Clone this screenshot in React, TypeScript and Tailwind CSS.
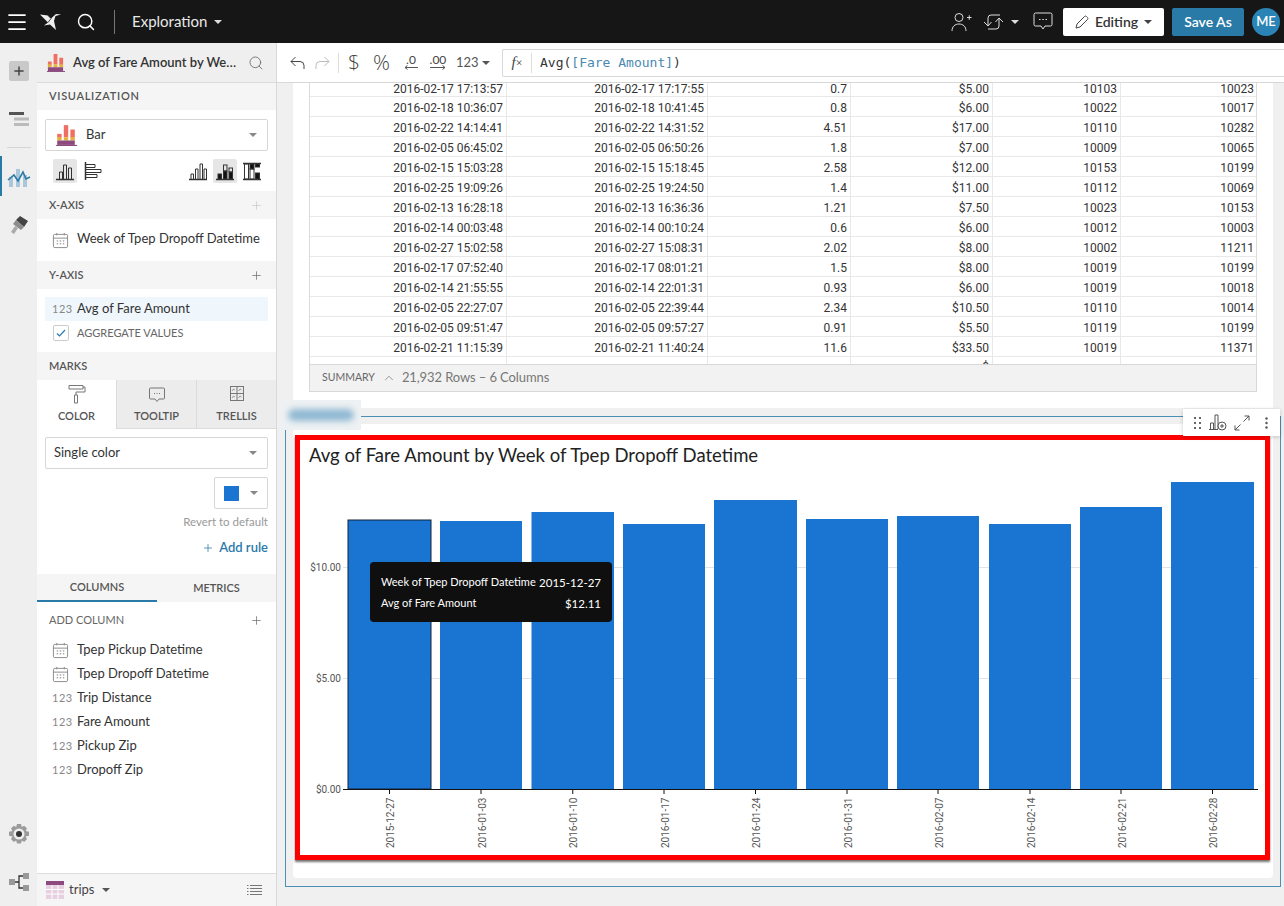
import { ChevronUp, Menu, Plus, Search } from "lucide-react";

const rows = [
  ["2016-02-17 17:13:57", "2016-02-17 17:17:55", "0.7", "$5.00", "10103", "10023"],
  ["2016-02-18 10:36:07", "2016-02-18 10:41:45", "0.8", "$6.00", "10022", "10017"],
  ["2016-02-22 14:14:41", "2016-02-22 14:31:52", "4.51", "$17.00", "10110", "10282"],
  ["2016-02-05 06:45:02", "2016-02-05 06:50:26", "1.8", "$7.00", "10009", "10065"],
  ["2016-02-15 15:03:28", "2016-02-15 15:18:45", "2.58", "$12.00", "10153", "10199"],
  ["2016-02-25 19:09:26", "2016-02-25 19:24:50", "1.4", "$11.00", "10112", "10069"],
  ["2016-02-13 16:28:18", "2016-02-13 16:36:36", "1.21", "$7.50", "10023", "10153"],
  ["2016-02-14 00:03:48", "2016-02-14 00:10:24", "0.6", "$6.00", "10012", "10003"],
  ["2016-02-27 15:02:58", "2016-02-27 15:08:31", "2.02", "$8.00", "10002", "11211"],
  ["2016-02-17 07:52:40", "2016-02-17 08:01:21", "1.5", "$8.00", "10019", "10199"],
  ["2016-02-14 21:55:55", "2016-02-14 22:01:31", "0.93", "$6.00", "10019", "10018"],
  ["2016-02-05 22:27:07", "2016-02-05 22:39:44", "2.34", "$10.50", "10110", "10014"],
  ["2016-02-05 09:51:47", "2016-02-05 09:57:27", "0.91", "$5.50", "10119", "10199"],
  ["2016-02-21 11:15:39", "2016-02-21 11:40:24", "11.6", "$33.50", "10019", "11371"],
  ["", "", "", "$", "", ""],
];

const bars = [
  { x: 348, w: 83, top: 520, label: "2015-12-27" },
  { x: 440, w: 82, top: 521, label: "2016-01-03" },
  { x: 531.5, w: 82.5, top: 512, label: "2016-01-10" },
  { x: 623, w: 82, top: 524, label: "2016-01-17" },
  { x: 714, w: 83, top: 500, label: "2016-01-24" },
  { x: 806, w: 82, top: 519, label: "2016-01-31" },
  { x: 897, w: 82, top: 516, label: "2016-02-07" },
  { x: 989, w: 82, top: 524, label: "2016-02-14" },
  { x: 1080, w: 82, top: 507, label: "2016-02-21" },
  { x: 1171, w: 83, top: 482, label: "2016-02-28" },
];

const columns = [
  { kind: "date", name: "Tpep Pickup Datetime" },
  { kind: "date", name: "Tpep Dropoff Datetime" },
  { kind: "num", name: "Trip Distance" },
  { kind: "num", name: "Fare Amount" },
  { kind: "num", name: "Pickup Zip" },
  { kind: "num", name: "Dropoff Zip" },
];

function Caret({ className = "border-t-[#777]" }: { className?: string }) {
  return <span className={`inline-block w-0 h-0 border-x-[4px] border-x-transparent border-t-[4px] ${className}`} />;
}

function BarColorIcon({ size = 19 }: { size?: number }) {
  return (
    <svg width={size} height={size} viewBox="0 0 20 20" className="shrink-0">
      <rect x="2" y="9" width="4" height="3.5" fill="#ef6f63" />
      <rect x="8" y="1" width="4" height="11" fill="#ef6f63" />
      <rect x="14" y="5" width="4" height="7.5" fill="#ef6f63" />
      <rect x="2" y="12" width="4" height="3" fill="#e3b33d" />
      <rect x="8" y="12" width="4" height="3" fill="#e3b33d" />
      <rect x="14" y="12" width="4" height="3" fill="#e3b33d" />
      <rect x="2" y="15" width="16" height="4" fill="#8c4a7e" />
      <rect x="1" y="19" width="19" height="1" fill="#8c4a7e" />
    </svg>
  );
}

function CalendarIcon() {
  return (
    <svg width="17" height="17" viewBox="0 0 18 18" fill="none" stroke="#888" strokeWidth="1" className="shrink-0">
      <rect x="1.5" y="2.5" width="15" height="14" rx="1.5" />
      <path d="M1.5 6.5h15M5 1v2.5M13 1v2.5" />
      <path d="M5 9.5h1.5M8.2 9.5h1.5M11.5 9.5H13M5 12.5h1.5M8.2 12.5h1.5M11.5 12.5H13" stroke="#777" />
    </svg>
  );
}

function ChartToggle({ kind }: { kind: string }) {
  const shared = { width: 20, height: 20, viewBox: "0 0 20 20", fill: "none", stroke: "#333", strokeWidth: 1 };
  if (kind === "column") {
    return (
      <svg {...shared}>
        <path d="M1 18.5h18" strokeWidth="1.5" />
        <path d="M4.5 18v-7h3v7M8.5 18V4h3v14M13.5 18V7h3v11" />
      </svg>
    );
  }
  if (kind === "row") {
    return (
      <svg {...shared}>
        <path d="M1.5 1v18" strokeWidth="1.5" />
        <path d="M2 3.5h9v3H2M2 8.5h15v3H2M2 13.5h11v3H2" />
      </svg>
    );
  }
  if (kind === "grouped") {
    return (
      <svg {...shared}>
        <path d="M1 18.5h18" strokeWidth="1.5" />
        <path d="M3 18v-5h2.5v5M7.5 18V8H10v10M12 18V3h2.5v15M16 18V8h2.5v10" />
      </svg>
    );
  }
  if (kind === "stacked") {
    return (
      <svg {...shared}>
        <path d="M1 18.5h18" strokeWidth="1.5" />
        <rect x="3" y="13" width="3.5" height="5" fill="#111" />
        <rect x="8.5" y="10" width="3.5" height="8" fill="#111" />
        <rect x="8.5" y="4" width="3.5" height="6" />
        <rect x="14" y="11" width="3.5" height="7" fill="#111" />
        <rect x="14" y="7" width="3.5" height="4" />
      </svg>
    );
  }
  return (
    <svg {...shared}>
      <path d="M1 2.5h18M1 18.5h18" strokeWidth="1.5" />
      <rect x="2.5" y="3" width="4" height="15" />
      <rect x="8" y="3" width="4" height="5" fill="#111" />
      <rect x="8" y="8" width="4" height="10" />
      <rect x="13.5" y="3" width="4" height="3" fill="#111" />
      <rect x="13.5" y="12" width="4" height="6" fill="#111" />
    </svg>
  );
}

function SectionHead({ title, plus }: { title: string; plus?: string }) {
  return (
    <div className="h-[28px] bg-[#f5f5f5] px-3 flex items-center justify-between text-[11px] font-semibold text-[#555]">
      <span>{title}</span>
      {plus && <Plus className={`w-[13px] h-[13px] mr-[1px] ${plus}`} strokeWidth={1.5} />}
    </div>
  );
}

function Select({ children }: { children: React.ReactNode }) {
  return (
    <div className="h-[32px] border border-[#d6d6d6] rounded-[2px] flex items-center justify-between pr-[10px] bg-white">
      <div className="flex items-center">{children}</div>
      <Caret className="border-t-[#888]" />
    </div>
  );
}

function Rail() {
  return (
    <div className="w-[37px] shrink-0 bg-[#efefef] flex flex-col items-center relative">
      <div className="mt-[18px] w-[20px] h-[20px] rounded-[2px] bg-[#c9c9c9] flex items-center justify-center">
        <Plus className="w-[14px] h-[14px] text-[#444]" strokeWidth={2.5} />
      </div>
      <svg width="20" height="16" viewBox="0 0 20 16" className="mt-[30px]">
        <rect x="0" y="1" width="15" height="3" fill="#555" />
        <rect x="5" y="6.5" width="15" height="3" fill="#bbb" />
        <rect x="5" y="12" width="15" height="3" fill="#bbb" />
      </svg>
      <div className="mt-[20px] w-[24px] h-px bg-[#d5d5d5]" />
      <div className="absolute left-0 top-[113px] w-[2px] h-[40px] bg-[#2a7aa8]" />
      <svg width="24" height="24" viewBox="0 0 24 24" className="mt-[17px]">
        <rect x="2" y="12" width="4" height="10" fill="#a9c6da" />
        <rect x="9" y="4" width="4" height="18" fill="#a9c6da" />
        <rect x="16" y="10" width="4" height="12" fill="#a9c6da" />
        <path d="M1 15l6-5 4 6 5-9 3 7 4-2" fill="none" stroke="#2a7aa8" strokeWidth="1.6" />
      </svg>
      <svg width="20" height="20" viewBox="0 0 20 20" className="mt-[26px]">
        <path d="M11 1l8 5-4 6-8-7z" fill="#444" />
        <path d="M7 5l8 7-3 3-8-6z" fill="#8c8c8c" />
        <path d="M6 11l3 2-4 6-3-2z" fill="#aaa" />
      </svg>
      <svg width="20" height="20" viewBox="0 0 20 20" className="mt-auto mb-[29px]">
        <path d="M8 0h4l.8 3 2.4-1.3 2.8 2.8-1.4 2.5 3.4.8v4l-3.4.8 1.4 2.5-2.8 2.8-2.4-1.3-.8 3H8l-.8-3-2.4 1.3L2 15l1.4-2.5L0 11.7v-4l3.4-.8L2 4.5l2.800-2.8L7.200 3z" fill="#9b9b9b" />
        <circle cx="10" cy="10" r="5.5" fill="#eee" />
        <circle cx="10" cy="10" r="3" fill="#333" />
      </svg>
      <svg width="20" height="18" viewBox="0 0 20 18" className="mb-[15px]">
        <rect x="0" y="6" width="6" height="6" fill="#999" />
        <rect x="14" y="0" width="6" height="6" fill="#999" />
        <rect x="14" y="12" width="6" height="6" fill="#999" />
        <path d="M6 9h4M14 3h-4v12h4" fill="none" stroke="#333" strokeWidth="1.3" />
      </svg>
    </div>
  );
}

function Panel() {
  return (
    <div className="w-[240px] shrink-0 border-r border-[#d8d8d8] bg-white flex flex-col">
      <div className="h-[40px] bg-[#efefef] border-b border-[#dcdcdc] flex items-center pl-[9px] pr-[12px]">
        <BarColorIcon />
        <span className="ml-[8px] flex-1 whitespace-nowrap text-[13px] font-semibold text-[#333]">Avg of Fare Amount by We…</span>
        <Search className="w-[16px] h-[16px] text-[#666] ml-[6px]" strokeWidth={1.25} />
      </div>
      <div className="h-[27px] bg-[#f5f5f5] px-3 flex items-center text-[11px] font-semibold tracking-[0.7px] text-[#555]">VISUALIZATION</div>

      <div className="h-[81px] px-2 pt-[9px]">
        <Select>
          <span className="ml-[9px] mr-[9px]"><BarColorIcon size={22} /></span>
          <span className="text-[13px] text-[#333]">Bar</span>
        </Select>
        <div className="mt-[8px] flex items-center justify-between pl-2 pr-[6px]">
          <div className="flex items-center gap-[7px]">
            <div className="w-[24px] h-[24px] rounded-[2px] bg-[#e6e6e6] flex items-center justify-center"><ChartToggle kind="column" /></div>
            <ChartToggle kind="row" />
          </div>
          <div className="flex items-center gap-[5px]">
            <ChartToggle kind="grouped" />
            <div className="w-[24px] h-[24px] rounded-[2px] bg-[#e6e6e6] flex items-center justify-center"><ChartToggle kind="stacked" /></div>
            <ChartToggle kind="full" />
          </div>
        </div>
      </div>

      <SectionHead title="X-AXIS" plus="text-[#ccc]" />
      <div className="h-[42px] pl-[15px] flex items-center gap-[8px] text-[13px] text-[#333]">
        <CalendarIcon />
        <span className="whitespace-nowrap -mt-[2px]">Week of Tpep Dropoff Datetime</span>
      </div>

      <SectionHead title="Y-AXIS" plus="text-[#777]" />
      <div className="h-[63px] px-2 pt-2">
        <div className="h-[24px] bg-[#eff7fc] flex items-center pl-[7px] text-[13px] text-[#333]">
          <span className="w-[25px] text-[11px] tracking-[0.5px] text-[#888]">123</span>
          <span>Avg of Fare Amount</span>
        </div>
        <div className="mt-[4px] flex items-center pl-2">
          <div className="w-[16px] h-[16px] border border-[#ccc] rounded-[2px] flex items-center justify-center">
            <svg width="10" height="8" viewBox="0 0 10 8" fill="none" stroke="#2a7aa8" strokeWidth="1.2"><path d="M1 4.5l2.5 2.5L9 1" /></svg>
          </div>
          <span className="ml-2 text-[11px] text-[#666]">AGGREGATE VALUES</span>
        </div>
      </div>

      <SectionHead title="MARKS" />
      <div className="h-[49px] flex text-[11px] font-semibold text-[#555]">
        <div className="w-[79px] flex flex-col items-center pt-[4px] bg-white">
          <svg width="18" height="20" viewBox="0 0 18 20" fill="none" stroke="#777" strokeWidth="1">
            <path d="M1 1.5h14V5H1zM15 3h2v5H8v3M6.5 11h3v8h-3z" />
          </svg>
          <span className="mt-[4px]">COLOR</span>
        </div>
        <div className="w-[80px] flex flex-col items-center pt-[4px] bg-[#ececec] border-l border-b border-[#dcdcdc]">
          <svg width="18" height="20" viewBox="0 0 18 20" fill="none" stroke="#777" strokeWidth="1">
            <path d="M2.5 4h13a1 1 0 0 1 1 1v9a1 1 0 0 1-1 1H11l-2 2.500L7 15H2.500a1 1 0 0 1-1-1V5a1 1 0 0 1 1-1z" />
            <path d="M6 9.5h1M8.5 9.5h1M11 9.5h1" />
          </svg>
          <span className="mt-[4px]">TOOLTIP</span>
        </div>
        <div className="flex-1 flex flex-col items-center pt-[4px] bg-[#ececec] border-l border-b border-[#dcdcdc]">
          <svg width="18" height="20" viewBox="0 0 18 20" fill="none" stroke="#777" strokeWidth="1">
            <rect x="2.5" y="2.5" width="13" height="14" />
            <path d="M9 2.5v14M2.5 9.5h13" />
            <path d="M4 7l1.5-2L7 6M10.500 7L12 5l1.5 1M4 14l1.5-2L7 13M10.500 14l1.5-2 1.5 1" strokeWidth="0.7" />
          </svg>
          <span className="mt-[4px]">TRELLIS</span>
        </div>
      </div>

      <div className="h-[145px] px-2 pt-2 flex flex-col items-stretch">
        <Select><span className="ml-2 text-[13px] text-[#333] -mt-[1px]">Single color</span></Select>
        <div className="self-end mt-[8px] w-[54px] h-[32px] border border-[#d6d6d6] rounded-[2px] flex items-center pl-[9px] gap-[11px]">
          <span className="w-[15px] h-[15px] bg-[#1a75d2]" />
          <Caret className="border-t-[#888]" />
        </div>
        <div className="self-end mt-[4px] text-[11.5px] text-[#999]">Revert to default</div>
        <div className="self-end mt-[8px] flex items-center gap-[5px] text-[13px] font-semibold text-[#2a7aa8]">
          <Plus className="w-[12px] h-[12px]" strokeWidth={1.5} />
          <span>Add rule</span>
        </div>
      </div>

      <div className="h-[28px] bg-[#f5f5f5] flex text-[11px] font-semibold text-[#555]">
        <div className="w-[120px] border-b-2 border-[#2a7aa8] flex items-center justify-center">COLUMNS</div>
        <div className="flex-1 flex items-center justify-center">METRICS</div>
      </div>
      <div className="h-[36px] px-3 flex items-center justify-between text-[11px] text-[#666]">
        <span>ADD COLUMN</span>
        <Plus className="w-[13px] h-[13px] mr-[1px] text-[#777]" strokeWidth={1.5} />
      </div>
      <div className="pl-[15px]">
        {columns.map((c) => (
          <div key={c.name} className="h-[24px] flex items-center text-[13px] text-[#333]">
            {c.kind === "date" ? (
              <span className="w-[25px]"><CalendarIcon /></span>
            ) : (
              <span className="w-[25px] text-[11px] tracking-[0.5px] text-[#888]">123</span>
            )}
            <span>{c.name}</span>
          </div>
        ))}
      </div>

      <div className="mt-auto h-[33px] bg-[#f5f5f5] border-t border-[#dcdcdc] flex items-center pl-[9px] pr-[14px]">
        <svg width="18" height="18" viewBox="0 0 18 18" className="shrink-0">
          <rect width="18" height="18" fill="#e6cfe0" />
          <rect width="18" height="4" fill="#8c4a7e" />
          <path d="M6 4v14M12 4v14M0 8.5h18M0 13h18" stroke="#fff" strokeWidth="1" />
        </svg>
        <span className="ml-[5px] mr-[8px] text-[13px] text-[#444]">trips</span>
        <Caret className="border-t-[#555]" />
        <svg width="15" height="13" viewBox="0 0 15 13" fill="none" stroke="#777" strokeWidth="1" className="ml-auto">
          <path d="M3 1.5h12M3 4.5h12M3 7.5h12M3 10.5h12M0 1.5h1.500M0 4.5h1.500M0 7.5h1.500M0 10.5h1.500" />
        </svg>
      </div>
    </div>
  );
}

function Toolbar() {
  return (
    <div className="h-[40px] shrink-0 bg-white border-b border-[#d8d8d8] flex items-center">
      <div className="w-[225px] shrink-0 flex items-center text-[#444]">
        <svg width="15" height="13" viewBox="0 0 15 13" fill="none" stroke="#444" strokeWidth="1" className="ml-[13px]">
          <path d="M5.5 1L1 5.5 5.5 10M1 5.5h9a4 4 0 0 1 4 4V13" />
        </svg>
        <svg width="15" height="13" viewBox="0 0 15 13" fill="none" stroke="#bbb" strokeWidth="1" className="ml-[10px]">
          <path d="M9.5 1L14 5.5 9.5 10M14 5.5H5a4 4 0 0 0-4 4V13" />
        </svg>
        <span className="ml-[8px] w-px h-[20px] bg-[#ddd]" />
        <span className="ml-[9px] text-[21px] font-light leading-none font-['Open_Sans',sans-serif]">$</span>
        <span className="ml-[13px] text-[21px] font-light leading-none font-['Open_Sans',sans-serif]">%</span>
        <span className="ml-[13px] w-[16px] flex flex-col items-center leading-none">
          <span className="text-[12px] leading-[10px]">.0</span>
          <svg width="14" height="5" viewBox="0 0 14 5" fill="none" stroke="#555"><path d="M14 2.5H1M3.5 0.5L1 2.5l2.5 2" /></svg>
        </span>
        <span className="ml-[10px] w-[18px] flex flex-col items-center leading-none">
          <span className="text-[12px] leading-[10px]">.00</span>
          <svg width="16" height="5" viewBox="0 0 16 5" fill="none" stroke="#555"><path d="M0 2.5h15M12.5 0.5l2.5 2-2.5 2" /></svg>
        </span>
        <span className="ml-[9px] text-[13px] text-[#555]">123</span>
        <Caret className="ml-[3px] border-t-[#555]" />
      </div>
      <div className="flex-1 h-[28px] border border-[#d8d8d8] border-r-0 rounded-l-[2px] flex items-center">
        <span className="w-[28px] text-center text-[15px] leading-none text-[#444] font-['Liberation_Serif',serif]"><i>f</i><span className="text-[12px]">×</span></span>
        <span className="w-px h-[20px] bg-[#ddd]" />
        <span className="ml-[8px] font-['DejaVu_Sans_Mono',monospace] text-[13px] text-[#333]">
          Avg(<span className="text-[#4a8ab0]">[Fare Amount]</span>)
        </span>
      </div>
    </div>
  );
}

function DataTable() {
  return (
    <div className="h-[325px] shrink-0 w-[980px] ml-4 bg-white pl-4 overflow-hidden">
      <div className="w-[948px] h-[281px] overflow-hidden border-l border-r border-[#dcdcdc] font-['Roboto',sans-serif] text-[12px] text-[#333]">
        {rows.map((r, i) => (
          <div key={i} className={`grid grid-cols-[197px_201px_143px_142px_128px_136px] border-b border-[#e8e8e8] ${i === 0 ? "h-[14px]" : "h-[20px]"}`}>
            {r.map((v, j) => (
              <div key={j} className={`border-r border-[#e8e8e8] last:border-r-0 flex items-center justify-end pr-[3px] leading-none ${i === 0 ? "pb-[3px]" : i === 14 ? "" : "pt-[3px]"}`}>{v}</div>
            ))}
          </div>
        ))}
      </div>
      <div className="w-[948px] h-[28px] bg-[#f2f2f2] border border-[#d8d8d8] flex items-center pl-[12px] text-[#666]">
        <span className="text-[10.5px]">SUMMARY</span>
        <ChevronUp className="w-[14px] h-[14px] ml-[7px] mr-[6px] text-[#777]" strokeWidth={1.25} />
        <span className="text-[13px] tracking-[-0.1px] text-[#777]">21,932 Rows – 6 Columns</span>
      </div>
    </div>
  );
}

function BarChart() {
  return (
    <svg width="965" height="415" viewBox="300 440 965 415" className="block">
      <text x="309" y="462" fontSize="18.5" fill="#222" fontFamily="Lato, sans-serif">Avg of Fare Amount by Week of Tpep Dropoff Datetime</text>
      <path d="M343 567.5H1258M343 678.5H1258" stroke="#e4e4e4" />
      <g fontSize="10" fill="#555" fontFamily="Roboto, sans-serif" textAnchor="end">
        <text x="341" y="571">$10.00</text>
        <text x="341" y="682">$5.00</text>
        <text x="341" y="793">$0.00</text>
      </g>
      {bars.map((b, i) => (
        <g key={b.label}>
          <rect
            x={b.x}
            y={b.top}
            width={b.w}
            height={789 - b.top}
            fill="#1a75d2"
            stroke={i === 0 ? "#10243a" : "none"}
          />
          <path d={`M${b.x + b.w / 2} 789v5`} stroke="#111" />
          <text
            transform={`translate(${b.x + b.w / 2 + 4.5} 848) rotate(-90)`}
            fontSize="10"
            fill="#555"
            fontFamily="Roboto, sans-serif"
          >
            {b.label}
          </text>
        </g>
      ))}
      <path d="M343 789.5H1258" stroke="#111" />
    </svg>
  );
}

function ChartFrame() {
  return (
    <div className="relative mt-2 ml-2 w-[996px] h-[471px] border border-[#4a8fb5] p-[7px]">
      <div className="absolute left-[-5px] top-[-17px] w-[80px] h-[30px] bg-[#eef1f3] flex items-center justify-center">
        <div className="w-[66px] h-[12px] rounded-full bg-[#8fb8d2] blur-[3px]" />
      </div>
      <div className="absolute right-0 top-[-8px] w-[97px] h-[27px] bg-white shadow-[0_1px_4px_rgba(0,0,0,0.2)] flex items-center pl-[11px] z-10">
        <svg width="8" height="12" viewBox="0 0 8 12" fill="#666">
          <rect x="0" y="0" width="2" height="2" /><rect x="5" y="0" width="2" height="2" />
          <rect x="0" y="5" width="2" height="2" /><rect x="5" y="5" width="2" height="2" />
          <rect x="0" y="10" width="2" height="2" /><rect x="5" y="10" width="2" height="2" />
        </svg>
        <svg width="18" height="17" viewBox="0 0 18 17" fill="none" stroke="#555" strokeWidth="1" className="ml-[7px]">
          <path d="M0 15.5h9M1.5 15V9h3v6M6 15V1h3v14" />
          <circle cx="13" cy="12" r="4" fill="#fff" />
          <path d="M13 10v4M11 12h4" />
        </svg>
        <svg width="16" height="16" viewBox="0 0 16 16" fill="none" stroke="#555" strokeWidth="1" className="ml-[7px]">
          <path d="M15 1L9.5 6.5M10.5 1H15v4.5M1 15l5.5-5.5M1 10.5V15h4.5" />
        </svg>
        <svg width="3" height="12" viewBox="0 0 3 12" fill="#555" className="ml-[15px]">
          <circle cx="1.5" cy="1.5" r="1.2" /><circle cx="1.5" cy="6" r="1.2" /><circle cx="1.5" cy="10.5" r="1.2" />
        </svg>
      </div>
      <div className="w-[980px] h-[454px] bg-white rounded-[4px] pt-[11px] pl-[2px]">
        <div className="relative w-[975px] h-[425px] border-[5px] border-[#ff0000] shadow-[0_2px_2px_rgba(0,0,0,0.55)]">
          <BarChart />
          <div className="absolute left-[70px] top-[122px] w-[242px] h-[60px] rounded-[4px] bg-[#0f0f0f] text-white text-[11px] whitespace-nowrap px-[11px] pt-[12px] pb-[10px] flex flex-col justify-between">
            <div className="flex justify-between"><span>Week of Tpep Dropoff Datetime</span><span className="text-[11.5px]">2015-12-27</span></div>
            <div className="flex justify-between"><span>Avg of Fare Amount</span><span className="text-[11.5px]">$12.11</span></div>
          </div>
        </div>
      </div>
    </div>
  );
}

export default function App() {
  return (
    <div className="w-[1284px] h-[906px] overflow-hidden flex flex-col bg-[#f0f0f0] font-['Lato',sans-serif]">
      <header className="h-[43px] shrink-0 bg-[#161616] flex items-center text-white">
        <Menu className="ml-[5px] w-[24px] h-[24px]" strokeWidth={1.75} />
        <svg width="22" height="20" viewBox="0 0 22 20" fill="none" className="ml-[11px]">
          <path d="M0 2.5l8 1 3 3 5-4.5 5 .5-5.500 1.500-1.500 5 2 9-6-5.500L4 13.500l4-3z" fill="#eee" />
          <path d="M8 3.5l3 3-3 4" stroke="#161616" strokeWidth="0.8" />
        </svg>
        <Search className="ml-[14px] w-[20px] h-[20px]" strokeWidth={1.75} />
        <span className="ml-[18px] w-px h-[24px] bg-[#777]" />
        <span className="ml-[17px] text-[15px] text-[#e8e8e8]">Exploration</span>
        <Caret className="ml-[7px] border-t-[#ddd]" />
        <div className="ml-auto flex items-center">
          <svg width="21" height="20" viewBox="0 0 21 20" fill="none" stroke="#ddd" strokeWidth="1">
            <circle cx="8" cy="5.5" r="4" />
            <path d="M1 19c0-4.5 3-7 7-7s7 2.5 7 7M16 5.5h4.5M18.250 3.250v4.500" />
          </svg>
          <svg width="21" height="18" viewBox="0 0 21 18" fill="none" stroke="#ddd" strokeWidth="1" className="ml-[11px]">
            <path d="M5 13V5a3 3 0 0 1 3-3h9M1 9l4 4 3.5-4M16 5v8a3 3 0 0 1-3 3H5M20 9l-4-4-3.500 4" />
          </svg>
          <Caret className="ml-[7px] border-t-[#ddd]" />
          <svg width="20" height="19" viewBox="0 0 20 19" fill="none" stroke="#ddd" strokeWidth="1" className="ml-[14px]">
            <path d="M2.5 1h15A1.500 1.500 0 0 1 19 2.500v10a1.500 1.500 0 0 1-1.500 1.500H12l-2 3-2-3H2.500A1.500 1.500 0 0 1 1 12.500v-10A1.500 1.500 0 0 1 2.500 1z" />
            <path d="M6 7.5h1.500M9.300 7.500h1.500M12.500 7.500H14" />
          </svg>
          <div className="ml-[10px] w-[101px] h-[28px] rounded-[2px] bg-white flex items-center justify-center text-[14px] font-semibold text-[#333]">
            <svg width="14" height="14" viewBox="0 0 14 14" fill="none" stroke="#444" strokeWidth="1">
              <path d="M1 13l1-4 7.500-7.500a1.500 1.500 0 0 1 2 0l1 1a1.500 1.500 0 0 1 0 2L5 12z" />
            </svg>
            <span className="ml-[6px]">Editing</span>
            <Caret className="ml-[6px] border-t-[#444]" />
          </div>
          <div className="ml-2 w-[72px] h-[28px] rounded-[2px] bg-[#2a7aa8] flex items-center justify-center text-[14px] font-semibold">Save As</div>
          <div className="ml-2 mr-[4px] w-[28px] h-[28px] rounded-full bg-[#2a84b5] flex items-center justify-center text-[13px] font-semibold">ME</div>
        </div>
      </header>
      <div className="flex-1 flex min-h-0">
        <Rail />
        <Panel />
        <main className="flex-1 min-w-0 flex flex-col overflow-hidden">
          <Toolbar />
          <DataTable />
          <ChartFrame />
        </main>
      </div>
    </div>
  );
}
